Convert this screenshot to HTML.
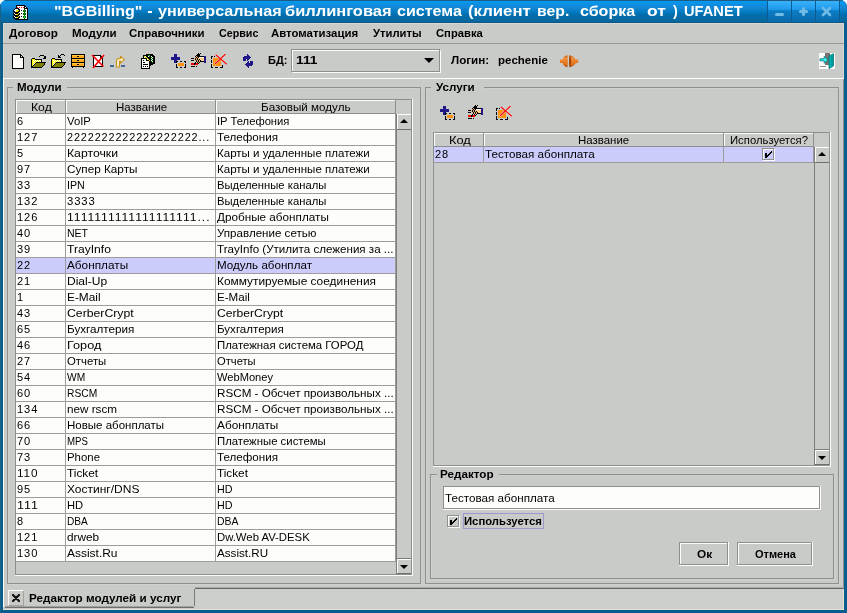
<!DOCTYPE html>
<html><head><meta charset="utf-8"><title>BGBilling</title>
<style>
html,body{margin:0;padding:0;}
body{width:847px;height:613px;overflow:hidden;position:relative;background:#fff;font-family:"Liberation Sans",sans-serif;font-size:11px;color:#000;}
div,span,svg{position:absolute;box-sizing:border-box;}
.t{white-space:pre;line-height:14px;height:14px;transform-origin:0 50%;}
.b{font-weight:bold;}
</style></head><body>

<div style="left:0;top:0;width:847px;height:613px;background:#075d8d;border-radius:7px 7px 0 0;overflow:hidden;will-change:transform;">
<div style="left:0;top:0;width:847px;height:23px;background:linear-gradient(#0098f0 0px,#0098f0 2px,#0c92e6 3px,#1088da 7px,#1b85d0 8px,#0b82cb 9.5px,#0078bc 13px,#0070b0 14px,#066ba4 18px,#0868a0 21px,#0b6498 22px,#0c5b8b 23px);"></div>
<div style="left:0px;top:0px;width:847px;height:1px;background:#1f5a80;"></div>
<div style="left:0px;top:22px;width:847px;height:1px;background:#0c5a8a;"></div>
<div class="t b" style="left:54.05px;top:2.00px;transform:scaleX(1.1467);font-size:14px;line-height:18px;height:18px;color:#fff;">"BGBilling"</div>
<div class="t b" style="left:157.80px;top:2.00px;transform:scaleX(1.1529);font-size:14px;line-height:18px;height:18px;color:#fff;">универсальная</div>
<div class="t b" style="left:285.23px;top:2.00px;transform:scaleX(1.1753);font-size:14px;line-height:18px;height:18px;color:#fff;">биллинговая</div>
<div class="t b" style="left:396.77px;top:2.00px;transform:scaleX(1.1478);font-size:14px;line-height:18px;height:18px;color:#fff;">система</div>
<div class="t b" style="left:468.20px;top:2.00px;transform:scaleX(1.1961);font-size:14px;line-height:18px;height:18px;color:#fff;">(клиент</div>
<div class="t b" style="left:536.66px;top:2.00px;transform:scaleX(1.1264);font-size:14px;line-height:18px;height:18px;color:#fff;">вер.</div>
<div class="t b" style="left:580.18px;top:2.00px;transform:scaleX(1.1460);font-size:14px;line-height:18px;height:18px;color:#fff;">сборка</div>
<div class="t b" style="left:647.10px;top:2.00px;transform:scaleX(1.2481);font-size:14px;line-height:18px;height:18px;color:#fff;">от</div>
<div class="t b" style="left:673.10px;top:2.00px;transform:scaleX(1.0252);font-size:14px;line-height:18px;height:18px;color:#fff;">)</div>
<div class="t b" style="left:683.75px;top:2.00px;transform:scaleX(1.0473);font-size:14px;line-height:18px;height:18px;color:#fff;">UFANET</div>
<div style="left:147.8px;top:11.4px;width:4.6px;height:2px;background:#fff;"></div>
<div style="left:767px;top:1px;width:24px;height:21px;background:linear-gradient(#38b2fc 0%,#1f9aea 40%,#0d7ec6 46%,#0a6aaa 100%);border-left:1px solid #0b5c93;"></div>
<div style="left:791px;top:1px;width:24px;height:21px;background:linear-gradient(#38b2fc 0%,#1f9aea 40%,#0d7ec6 46%,#0a6aaa 100%);border-left:1px solid #0b5c93;"></div>
<div style="left:815px;top:1px;width:24px;height:21px;background:linear-gradient(#38b2fc 0%,#1f9aea 40%,#0d7ec6 46%,#0a6aaa 100%);border-left:1px solid #0b5c93;"></div>
<div style="left:839px;top:1px;width:1px;height:21px;background:#0b5c93;"></div>
<div style="left:775px;top:13px;width:9px;height:3px;background:#70bbe6;border-radius:1.5px;"></div>
<div style="left:799px;top:10px;width:9px;height:3px;background:#70bbe6;border-radius:1.5px;"></div>
<div style="left:802px;top:7px;width:3px;height:9px;background:#70bbe6;border-radius:1.5px;"></div>
<svg style="left:821px;top:6px" width="11" height="11"><path d="M2 2L9 9M9 2L2 9" stroke="#70bbe6" stroke-width="2.6" stroke-linecap="round"/></svg>
<div style="left:3px;top:23px;width:841px;height:587px;background:#c9cbc8;"></div>
<div style="left:3px;top:23px;width:841px;height:1px;background:#d8d6d0;"></div>
<div style="left:3px;top:24px;width:1px;height:54px;background:#d8d4ce;"></div>
<div style="left:843px;top:24px;width:1px;height:54px;background:#dcd8d2;"></div>
<div class="t b" style="left:9.00px;top:26.00px;transform:scaleX(1.0652);">Договор</div>
<div class="t b" style="left:71.95px;top:26.00px;transform:scaleX(1.0491);">Модули</div>
<div class="t b" style="left:128.99px;top:26.00px;transform:scaleX(1.0418);">Справочники</div>
<div class="t b" style="left:219.00px;top:26.00px;transform:scaleX(0.9753);">Сервис</div>
<div class="t b" style="left:271.00px;top:26.00px;transform:scaleX(1.0362);">Автоматизация</div>
<div class="t b" style="left:373.00px;top:26.00px;transform:scaleX(1.0213);">Утилиты</div>
<div class="t b" style="left:436.00px;top:26.00px;transform:scaleX(1.0217);">Справка</div>
<div style="left:3px;top:43px;width:841px;height:1px;background:#979996;"></div>
<div style="left:3px;top:78px;width:841px;height:1px;background:#fdfdfc;"></div>
<div style="left:3px;top:78px;width:1px;height:529px;background:#fdfdfc;"></div>
<div style="left:0px;top:1px;width:1px;height:612px;background:#1f6089;"></div>
<div style="left:843px;top:79px;width:1px;height:510px;background:#8e908d;"></div>
<div style="left:195px;top:588px;width:649px;height:1px;background:#666865;"></div>
<div style="left:195px;top:587px;width:649px;height:1px;background:#a9aba8;"></div>
<div style="left:196px;top:589px;width:647px;height:21px;background:#cdcfcc;"></div>
<div class="t b" style="left:268.00px;top:53.40px;transform:scaleX(1.0016);">БД:</div>
<div class="t b" style="left:295.75px;top:53.40px;transform:scaleX(1.2500);">111</div>
<div class="t b" style="left:451.00px;top:53.40px;transform:scaleX(1.0575);">Логин:</div>
<div class="t b" style="left:497.96px;top:53.40px;transform:scaleX(1.0437);">pechenie</div>
<div style="left:291px;top:49px;width:149px;height:23px;background:transparent;border:1px solid #8e908d;"></div>
<div style="left:292px;top:50px;width:149px;height:23px;background:transparent;border:1px solid #fdfdfc;border-top-color:transparent;border-left-color:transparent;"></div>
<div style="left:292px;top:50px;width:1px;height:21px;background:#fdfdfc;"></div>
<div style="left:292px;top:50px;width:147px;height:1px;background:#fdfdfc;"></div>
<svg style="left:424px;top:58px" width="10" height="5"><path d="M0 0H10L5 5Z" fill="#000"/></svg>
<svg style="left:13px;top:5px" width="15" height="15" viewBox="0 0 15 15" shape-rendering="crispEdges"><rect x="3" y="0" width="9" height="1" fill="#000"/><rect x="3" y="1" width="1" height="1" fill="#000"/><rect x="4" y="1" width="7" height="1" fill="#fdfdfc"/><rect x="11" y="1" width="2" height="1" fill="#000"/><rect x="3" y="2" width="1" height="1" fill="#000"/><rect x="4" y="2" width="1" height="1" fill="#ff0000"/><rect x="5" y="2" width="1" height="1" fill="#fdfdfc"/><rect x="6" y="2" width="1" height="1" fill="#ff0000"/><rect x="7" y="2" width="1" height="1" fill="#fdfdfc"/><rect x="8" y="2" width="1" height="1" fill="#ff0000"/><rect x="9" y="2" width="1" height="1" fill="#fdfdfc"/><rect x="10" y="2" width="1" height="1" fill="#ff0000"/><rect x="11" y="2" width="1" height="1" fill="#000"/><rect x="12" y="2" width="1" height="1" fill="#fdfdfc"/><rect x="13" y="2" width="1" height="1" fill="#000"/><rect x="2" y="3" width="4" height="1" fill="#000"/><rect x="6" y="3" width="5" height="1" fill="#fdfdfc"/><rect x="11" y="3" width="4" height="1" fill="#000"/><rect x="1" y="4" width="1" height="1" fill="#000"/><rect x="2" y="4" width="3" height="1" fill="#fdfdfc"/><rect x="5" y="4" width="2" height="1" fill="#000"/><rect x="7" y="4" width="4" height="1" fill="#fdfdfc"/><rect x="11" y="4" width="1" height="1" fill="#007800"/><rect x="12" y="4" width="2" height="1" fill="#fdfdfc"/><rect x="14" y="4" width="1" height="1" fill="#000"/><rect x="0" y="5" width="1" height="1" fill="#000"/><rect x="1" y="5" width="2" height="1" fill="#fdfdfc"/><rect x="3" y="5" width="3" height="1" fill="#f0e800"/><rect x="6" y="5" width="1" height="1" fill="#000"/><rect x="7" y="5" width="1" height="1" fill="#fdfdfc"/><rect x="8" y="5" width="1" height="1" fill="#000"/><rect x="9" y="5" width="1" height="1" fill="#fdfdfc"/><rect x="10" y="5" width="3" height="1" fill="#007800"/><rect x="13" y="5" width="1" height="1" fill="#fdfdfc"/><rect x="14" y="5" width="1" height="1" fill="#000"/><rect x="0" y="6" width="2" height="1" fill="#000"/><rect x="2" y="6" width="1" height="1" fill="#fdfdfc"/><rect x="3" y="6" width="2" height="1" fill="#f0e800"/><rect x="5" y="6" width="2" height="1" fill="#000"/><rect x="7" y="6" width="3" height="1" fill="#fdfdfc"/><rect x="10" y="6" width="3" height="1" fill="#007800"/><rect x="13" y="6" width="1" height="1" fill="#fdfdfc"/><rect x="14" y="6" width="1" height="1" fill="#000"/><rect x="1" y="7" width="5" height="1" fill="#000"/><rect x="6" y="7" width="5" height="1" fill="#fdfdfc"/><rect x="11" y="7" width="1" height="1" fill="#007800"/><rect x="12" y="7" width="2" height="1" fill="#fdfdfc"/><rect x="14" y="7" width="1" height="1" fill="#000"/><rect x="0" y="8" width="1" height="1" fill="#000"/><rect x="1" y="8" width="1" height="1" fill="#fdfdfc"/><rect x="2" y="8" width="3" height="1" fill="#000"/><rect x="5" y="8" width="1" height="1" fill="#f0e800"/><rect x="6" y="8" width="1" height="1" fill="#000"/><rect x="7" y="8" width="1" height="1" fill="#fdfdfc"/><rect x="8" y="8" width="1" height="1" fill="#000"/><rect x="9" y="8" width="1" height="1" fill="#fdfdfc"/><rect x="10" y="8" width="3" height="1" fill="#007800"/><rect x="13" y="8" width="1" height="1" fill="#fdfdfc"/><rect x="14" y="8" width="1" height="1" fill="#000"/><rect x="0" y="9" width="2" height="1" fill="#000"/><rect x="2" y="9" width="1" height="1" fill="#fdfdfc"/><rect x="3" y="9" width="2" height="1" fill="#f0e800"/><rect x="5" y="9" width="2" height="1" fill="#000"/><rect x="7" y="9" width="3" height="1" fill="#fdfdfc"/><rect x="10" y="9" width="3" height="1" fill="#007800"/><rect x="13" y="9" width="1" height="1" fill="#fdfdfc"/><rect x="14" y="9" width="1" height="1" fill="#000"/><rect x="1" y="10" width="5" height="1" fill="#000"/><rect x="6" y="10" width="5" height="1" fill="#fdfdfc"/><rect x="11" y="10" width="1" height="1" fill="#007800"/><rect x="12" y="10" width="2" height="1" fill="#fdfdfc"/><rect x="14" y="10" width="1" height="1" fill="#000"/><rect x="0" y="11" width="1" height="1" fill="#000"/><rect x="1" y="11" width="1" height="1" fill="#fdfdfc"/><rect x="2" y="11" width="3" height="1" fill="#000"/><rect x="5" y="11" width="1" height="1" fill="#f0e800"/><rect x="6" y="11" width="1" height="1" fill="#000"/><rect x="7" y="11" width="1" height="1" fill="#fdfdfc"/><rect x="8" y="11" width="1" height="1" fill="#000"/><rect x="9" y="11" width="1" height="1" fill="#fdfdfc"/><rect x="10" y="11" width="1" height="1" fill="#007800"/><rect x="11" y="11" width="1" height="1" fill="#00e040"/><rect x="12" y="11" width="1" height="1" fill="#007800"/><rect x="13" y="11" width="1" height="1" fill="#fdfdfc"/><rect x="14" y="11" width="1" height="1" fill="#000"/><rect x="0" y="12" width="2" height="1" fill="#000"/><rect x="2" y="12" width="1" height="1" fill="#fdfdfc"/><rect x="3" y="12" width="2" height="1" fill="#f0e800"/><rect x="5" y="12" width="2" height="1" fill="#000"/><rect x="7" y="12" width="3" height="1" fill="#fdfdfc"/><rect x="10" y="12" width="1" height="1" fill="#007800"/><rect x="11" y="12" width="1" height="1" fill="#00e040"/><rect x="12" y="12" width="1" height="1" fill="#007800"/><rect x="13" y="12" width="1" height="1" fill="#fdfdfc"/><rect x="14" y="12" width="1" height="1" fill="#000"/><rect x="1" y="13" width="5" height="1" fill="#000"/><rect x="6" y="13" width="5" height="1" fill="#fdfdfc"/><rect x="11" y="13" width="1" height="1" fill="#007800"/><rect x="12" y="13" width="2" height="1" fill="#fdfdfc"/><rect x="14" y="13" width="1" height="1" fill="#000"/><rect x="2" y="14" width="13" height="1" fill="#000"/></svg>
<svg style="left:12px;top:54px" width="12" height="15" viewBox="0 0 12 15" shape-rendering="crispEdges"><rect x="0" y="0" width="9" height="1" fill="#000"/><rect x="0" y="1" width="1" height="1" fill="#000"/><rect x="1" y="1" width="7" height="1" fill="#fdfdfc"/><rect x="8" y="1" width="2" height="1" fill="#000"/><rect x="0" y="2" width="1" height="1" fill="#000"/><rect x="1" y="2" width="7" height="1" fill="#fdfdfc"/><rect x="8" y="2" width="1" height="1" fill="#000"/><rect x="9" y="2" width="1" height="1" fill="#fdfdfc"/><rect x="10" y="2" width="1" height="1" fill="#000"/><rect x="0" y="3" width="1" height="1" fill="#000"/><rect x="1" y="3" width="7" height="1" fill="#fdfdfc"/><rect x="8" y="3" width="4" height="1" fill="#000"/><rect x="0" y="4" width="1" height="1" fill="#000"/><rect x="1" y="4" width="10" height="1" fill="#fdfdfc"/><rect x="11" y="4" width="1" height="1" fill="#000"/><rect x="0" y="5" width="1" height="1" fill="#000"/><rect x="1" y="5" width="10" height="1" fill="#fdfdfc"/><rect x="11" y="5" width="1" height="1" fill="#000"/><rect x="0" y="6" width="1" height="1" fill="#000"/><rect x="1" y="6" width="10" height="1" fill="#fdfdfc"/><rect x="11" y="6" width="1" height="1" fill="#000"/><rect x="0" y="7" width="1" height="1" fill="#000"/><rect x="1" y="7" width="10" height="1" fill="#fdfdfc"/><rect x="11" y="7" width="1" height="1" fill="#000"/><rect x="0" y="8" width="1" height="1" fill="#000"/><rect x="1" y="8" width="10" height="1" fill="#fdfdfc"/><rect x="11" y="8" width="1" height="1" fill="#000"/><rect x="0" y="9" width="1" height="1" fill="#000"/><rect x="1" y="9" width="10" height="1" fill="#fdfdfc"/><rect x="11" y="9" width="1" height="1" fill="#000"/><rect x="0" y="10" width="1" height="1" fill="#000"/><rect x="1" y="10" width="10" height="1" fill="#fdfdfc"/><rect x="11" y="10" width="1" height="1" fill="#000"/><rect x="0" y="11" width="1" height="1" fill="#000"/><rect x="1" y="11" width="10" height="1" fill="#fdfdfc"/><rect x="11" y="11" width="1" height="1" fill="#000"/><rect x="0" y="12" width="1" height="1" fill="#000"/><rect x="1" y="12" width="10" height="1" fill="#fdfdfc"/><rect x="11" y="12" width="1" height="1" fill="#000"/><rect x="0" y="13" width="1" height="1" fill="#000"/><rect x="1" y="13" width="10" height="1" fill="#fdfdfc"/><rect x="11" y="13" width="1" height="1" fill="#000"/><rect x="0" y="14" width="12" height="1" fill="#000"/></svg>
<svg style="left:31px;top:54px" width="16" height="14" viewBox="0 0 16 14" shape-rendering="crispEdges"><rect x="9" y="1" width="4" height="1" fill="#000"/><rect x="8" y="2" width="1" height="1" fill="#000"/><rect x="13" y="2" width="2" height="1" fill="#000"/><rect x="13" y="3" width="2" height="1" fill="#000"/><rect x="1" y="4" width="3" height="1" fill="#000"/><rect x="12" y="4" width="3" height="1" fill="#000"/><rect x="0" y="5" width="1" height="1" fill="#000"/><rect x="1" y="5" width="3" height="1" fill="#ffff00"/><rect x="4" y="5" width="7" height="1" fill="#000"/><rect x="0" y="6" width="1" height="1" fill="#000"/><rect x="1" y="6" width="1" height="1" fill="#ffff00"/><rect x="2" y="6" width="1" height="1" fill="#fdfdfc"/><rect x="3" y="6" width="1" height="1" fill="#ffff00"/><rect x="4" y="6" width="1" height="1" fill="#fdfdfc"/><rect x="5" y="6" width="1" height="1" fill="#ffff00"/><rect x="6" y="6" width="1" height="1" fill="#fdfdfc"/><rect x="7" y="6" width="1" height="1" fill="#ffff00"/><rect x="8" y="6" width="1" height="1" fill="#fdfdfc"/><rect x="9" y="6" width="1" height="1" fill="#ffff00"/><rect x="10" y="6" width="1" height="1" fill="#000"/><rect x="0" y="7" width="1" height="1" fill="#000"/><rect x="1" y="7" width="2" height="1" fill="#ffff00"/><rect x="3" y="7" width="1" height="1" fill="#fdfdfc"/><rect x="4" y="7" width="1" height="1" fill="#ffff00"/><rect x="5" y="7" width="1" height="1" fill="#fdfdfc"/><rect x="6" y="7" width="1" height="1" fill="#ffff00"/><rect x="7" y="7" width="1" height="1" fill="#fdfdfc"/><rect x="8" y="7" width="1" height="1" fill="#ffff00"/><rect x="9" y="7" width="1" height="1" fill="#fdfdfc"/><rect x="10" y="7" width="1" height="1" fill="#000"/><rect x="0" y="8" width="1" height="1" fill="#000"/><rect x="1" y="8" width="1" height="1" fill="#ffff00"/><rect x="2" y="8" width="1" height="1" fill="#fdfdfc"/><rect x="3" y="8" width="2" height="1" fill="#ffff00"/><rect x="5" y="8" width="10" height="1" fill="#000"/><rect x="0" y="9" width="1" height="1" fill="#000"/><rect x="1" y="9" width="2" height="1" fill="#ffff00"/><rect x="3" y="9" width="1" height="1" fill="#fdfdfc"/><rect x="4" y="9" width="1" height="1" fill="#000"/><rect x="5" y="9" width="8" height="1" fill="#808000"/><rect x="13" y="9" width="1" height="1" fill="#000"/><rect x="0" y="10" width="1" height="1" fill="#000"/><rect x="1" y="10" width="1" height="1" fill="#ffff00"/><rect x="2" y="10" width="1" height="1" fill="#fdfdfc"/><rect x="3" y="10" width="1" height="1" fill="#000"/><rect x="4" y="10" width="9" height="1" fill="#808000"/><rect x="13" y="10" width="1" height="1" fill="#000"/><rect x="0" y="11" width="1" height="1" fill="#000"/><rect x="1" y="11" width="1" height="1" fill="#ffff00"/><rect x="2" y="11" width="1" height="1" fill="#000"/><rect x="3" y="11" width="9" height="1" fill="#808000"/><rect x="12" y="11" width="1" height="1" fill="#000"/><rect x="0" y="12" width="2" height="1" fill="#000"/><rect x="2" y="12" width="9" height="1" fill="#808000"/><rect x="11" y="12" width="1" height="1" fill="#000"/><rect x="0" y="13" width="11" height="1" fill="#000"/></svg>
<svg style="left:51px;top:54px" width="16" height="14" viewBox="0 0 16 14" shape-rendering="crispEdges"><rect x="10" y="0" width="3" height="1" fill="#000"/><rect x="7" y="1" width="1" height="1" fill="#000"/><rect x="9" y="1" width="1" height="1" fill="#000"/><rect x="13" y="1" width="1" height="1" fill="#000"/><rect x="7" y="2" width="2" height="1" fill="#000"/><rect x="7" y="3" width="3" height="1" fill="#000"/><rect x="1" y="4" width="3" height="1" fill="#000"/><rect x="0" y="5" width="1" height="1" fill="#000"/><rect x="1" y="5" width="3" height="1" fill="#ffff00"/><rect x="4" y="5" width="7" height="1" fill="#000"/><rect x="0" y="6" width="1" height="1" fill="#000"/><rect x="1" y="6" width="1" height="1" fill="#ffff00"/><rect x="2" y="6" width="1" height="1" fill="#fdfdfc"/><rect x="3" y="6" width="1" height="1" fill="#ffff00"/><rect x="4" y="6" width="1" height="1" fill="#fdfdfc"/><rect x="5" y="6" width="1" height="1" fill="#ffff00"/><rect x="6" y="6" width="1" height="1" fill="#fdfdfc"/><rect x="7" y="6" width="1" height="1" fill="#ffff00"/><rect x="8" y="6" width="1" height="1" fill="#fdfdfc"/><rect x="9" y="6" width="1" height="1" fill="#ffff00"/><rect x="10" y="6" width="1" height="1" fill="#000"/><rect x="0" y="7" width="1" height="1" fill="#000"/><rect x="1" y="7" width="2" height="1" fill="#ffff00"/><rect x="3" y="7" width="1" height="1" fill="#fdfdfc"/><rect x="4" y="7" width="1" height="1" fill="#ffff00"/><rect x="5" y="7" width="1" height="1" fill="#fdfdfc"/><rect x="6" y="7" width="1" height="1" fill="#ffff00"/><rect x="7" y="7" width="1" height="1" fill="#fdfdfc"/><rect x="8" y="7" width="1" height="1" fill="#ffff00"/><rect x="9" y="7" width="1" height="1" fill="#fdfdfc"/><rect x="10" y="7" width="1" height="1" fill="#000"/><rect x="0" y="8" width="1" height="1" fill="#000"/><rect x="1" y="8" width="1" height="1" fill="#ffff00"/><rect x="2" y="8" width="1" height="1" fill="#fdfdfc"/><rect x="3" y="8" width="2" height="1" fill="#ffff00"/><rect x="5" y="8" width="10" height="1" fill="#000"/><rect x="0" y="9" width="1" height="1" fill="#000"/><rect x="1" y="9" width="2" height="1" fill="#ffff00"/><rect x="3" y="9" width="1" height="1" fill="#fdfdfc"/><rect x="4" y="9" width="1" height="1" fill="#000"/><rect x="5" y="9" width="8" height="1" fill="#808000"/><rect x="13" y="9" width="1" height="1" fill="#000"/><rect x="0" y="10" width="1" height="1" fill="#000"/><rect x="1" y="10" width="1" height="1" fill="#ffff00"/><rect x="2" y="10" width="1" height="1" fill="#fdfdfc"/><rect x="3" y="10" width="1" height="1" fill="#000"/><rect x="4" y="10" width="9" height="1" fill="#808000"/><rect x="13" y="10" width="1" height="1" fill="#000"/><rect x="0" y="11" width="1" height="1" fill="#000"/><rect x="1" y="11" width="1" height="1" fill="#ffff00"/><rect x="2" y="11" width="1" height="1" fill="#000"/><rect x="3" y="11" width="9" height="1" fill="#808000"/><rect x="12" y="11" width="1" height="1" fill="#000"/><rect x="0" y="12" width="2" height="1" fill="#000"/><rect x="2" y="12" width="9" height="1" fill="#808000"/><rect x="11" y="12" width="1" height="1" fill="#000"/><rect x="0" y="13" width="11" height="1" fill="#000"/></svg>
<svg style="left:71px;top:54px" width="14" height="14" viewBox="0 0 14 14" shape-rendering="crispEdges"><rect x="0" y="0" width="14" height="1" fill="#000"/><rect x="0" y="1" width="1" height="1" fill="#000"/><rect x="1" y="1" width="12" height="1" fill="#ffc848"/><rect x="13" y="1" width="1" height="1" fill="#000"/><rect x="0" y="2" width="1" height="1" fill="#000"/><rect x="1" y="2" width="5" height="1" fill="#ffa818"/><rect x="6" y="2" width="2" height="1" fill="#000"/><rect x="8" y="2" width="5" height="1" fill="#ffa818"/><rect x="13" y="2" width="1" height="1" fill="#000"/><rect x="0" y="3" width="1" height="1" fill="#000"/><rect x="1" y="3" width="12" height="1" fill="#ffa818"/><rect x="13" y="3" width="1" height="1" fill="#000"/><rect x="0" y="4" width="14" height="1" fill="#000"/><rect x="0" y="5" width="1" height="1" fill="#000"/><rect x="1" y="5" width="12" height="1" fill="#ffc848"/><rect x="13" y="5" width="1" height="1" fill="#000"/><rect x="0" y="6" width="1" height="1" fill="#000"/><rect x="1" y="6" width="5" height="1" fill="#ffa818"/><rect x="6" y="6" width="2" height="1" fill="#000"/><rect x="8" y="6" width="5" height="1" fill="#ffa818"/><rect x="13" y="6" width="1" height="1" fill="#000"/><rect x="0" y="7" width="1" height="1" fill="#000"/><rect x="1" y="7" width="12" height="1" fill="#ffa818"/><rect x="13" y="7" width="1" height="1" fill="#000"/><rect x="0" y="8" width="14" height="1" fill="#000"/><rect x="0" y="9" width="1" height="1" fill="#000"/><rect x="1" y="9" width="12" height="1" fill="#ffc848"/><rect x="13" y="9" width="1" height="1" fill="#000"/><rect x="0" y="10" width="1" height="1" fill="#000"/><rect x="1" y="10" width="5" height="1" fill="#ffa818"/><rect x="6" y="10" width="2" height="1" fill="#000"/><rect x="8" y="10" width="5" height="1" fill="#ffa818"/><rect x="13" y="10" width="1" height="1" fill="#000"/><rect x="0" y="11" width="1" height="1" fill="#000"/><rect x="1" y="11" width="12" height="1" fill="#ffa818"/><rect x="13" y="11" width="1" height="1" fill="#000"/><rect x="0" y="12" width="14" height="1" fill="#000"/><rect x="1" y="13" width="1" height="1" fill="#000"/><rect x="12" y="13" width="1" height="1" fill="#000"/></svg>
<svg style="left:91px;top:54px" width="15" height="15" viewBox="0 0 15 15" shape-rendering="crispEdges"><rect x="2" y="1" width="8" height="1" fill="#000"/><rect x="2" y="2" width="1" height="1" fill="#000"/><rect x="3" y="2" width="6" height="1" fill="#fdfdfc"/><rect x="9" y="2" width="2" height="1" fill="#000"/><rect x="2" y="3" width="1" height="1" fill="#000"/><rect x="3" y="3" width="6" height="1" fill="#fdfdfc"/><rect x="9" y="3" width="3" height="1" fill="#000"/><rect x="2" y="4" width="1" height="1" fill="#000"/><rect x="3" y="4" width="8" height="1" fill="#fdfdfc"/><rect x="11" y="4" width="1" height="1" fill="#000"/><rect x="2" y="5" width="1" height="1" fill="#000"/><rect x="3" y="5" width="8" height="1" fill="#fdfdfc"/><rect x="11" y="5" width="1" height="1" fill="#000"/><rect x="2" y="6" width="1" height="1" fill="#000"/><rect x="3" y="6" width="8" height="1" fill="#fdfdfc"/><rect x="11" y="6" width="1" height="1" fill="#000"/><rect x="2" y="7" width="1" height="1" fill="#000"/><rect x="3" y="7" width="8" height="1" fill="#fdfdfc"/><rect x="11" y="7" width="1" height="1" fill="#000"/><rect x="2" y="8" width="1" height="1" fill="#000"/><rect x="3" y="8" width="8" height="1" fill="#fdfdfc"/><rect x="11" y="8" width="1" height="1" fill="#000"/><rect x="2" y="9" width="1" height="1" fill="#000"/><rect x="3" y="9" width="8" height="1" fill="#fdfdfc"/><rect x="11" y="9" width="1" height="1" fill="#000"/><rect x="2" y="10" width="1" height="1" fill="#000"/><rect x="3" y="10" width="8" height="1" fill="#fdfdfc"/><rect x="11" y="10" width="1" height="1" fill="#000"/><rect x="2" y="11" width="1" height="1" fill="#000"/><rect x="3" y="11" width="8" height="1" fill="#fdfdfc"/><rect x="11" y="11" width="1" height="1" fill="#000"/><rect x="2" y="12" width="10" height="1" fill="#000"/><g shape-rendering="auto"><path d="M1 1L12.5 12.5M13 1L2 14" stroke="#ff0000" stroke-width="1.6" fill="none"/></g></svg>
<svg style="left:110px;top:55px" width="16" height="13" viewBox="0 0 16 13" shape-rendering="crispEdges"><rect x="0" y="10" width="4" height="2" fill="#48689c"/><rect x="11" y="10" width="4" height="2" fill="#48689c"/><g shape-rendering="auto"><path d="M6.5 12V6Q6.5 3.5 9 3.5H10.5V1.2L14.3 4.7L10.5 8.2V6H9.5V12Z" fill="#fff0c8" stroke="#c8901c" stroke-width="1.1" stroke-linejoin="round"/></g></svg>
<svg style="left:141px;top:54px" width="15" height="15" viewBox="0 0 15 15" shape-rendering="crispEdges"><rect x="5" y="0" width="7" height="1" fill="#000"/><rect x="2" y="1" width="5" height="1" fill="#000"/><rect x="7" y="1" width="1" height="1" fill="#007800"/><rect x="8" y="1" width="1" height="1" fill="#00e040"/><rect x="9" y="1" width="4" height="1" fill="#000"/><rect x="2" y="2" width="1" height="1" fill="#000"/><rect x="3" y="2" width="1" height="1" fill="#f0e800"/><rect x="4" y="2" width="1" height="1" fill="#fdfdfc"/><rect x="5" y="2" width="2" height="1" fill="#000"/><rect x="7" y="2" width="1" height="1" fill="#fdfdfc"/><rect x="8" y="2" width="1" height="1" fill="#007800"/><rect x="9" y="2" width="1" height="1" fill="#000"/><rect x="10" y="2" width="1" height="1" fill="#fdfdfc"/><rect x="11" y="2" width="3" height="1" fill="#000"/><rect x="2" y="3" width="1" height="1" fill="#000"/><rect x="3" y="3" width="1" height="1" fill="#fdfdfc"/><rect x="4" y="3" width="2" height="1" fill="#f0e800"/><rect x="6" y="3" width="4" height="1" fill="#000"/><rect x="10" y="3" width="1" height="1" fill="#007800"/><rect x="11" y="3" width="1" height="1" fill="#fdfdfc"/><rect x="12" y="3" width="2" height="1" fill="#000"/><rect x="0" y="4" width="6" height="1" fill="#000"/><rect x="6" y="4" width="1" height="1" fill="#f0e800"/><rect x="7" y="4" width="3" height="1" fill="#000"/><rect x="10" y="4" width="1" height="1" fill="#fdfdfc"/><rect x="11" y="4" width="1" height="1" fill="#007800"/><rect x="12" y="4" width="2" height="1" fill="#000"/><rect x="0" y="5" width="1" height="1" fill="#000"/><rect x="1" y="5" width="4" height="1" fill="#fdfdfc"/><rect x="5" y="5" width="1" height="1" fill="#000"/><rect x="6" y="5" width="1" height="1" fill="#fdfdfc"/><rect x="7" y="5" width="1" height="1" fill="#f0e800"/><rect x="8" y="5" width="2" height="1" fill="#000"/><rect x="10" y="5" width="1" height="1" fill="#007800"/><rect x="11" y="5" width="1" height="1" fill="#fdfdfc"/><rect x="12" y="5" width="2" height="1" fill="#000"/><rect x="0" y="6" width="1" height="1" fill="#000"/><rect x="1" y="6" width="1" height="1" fill="#fdfdfc"/><rect x="2" y="6" width="1" height="1" fill="#000"/><rect x="3" y="6" width="2" height="1" fill="#fdfdfc"/><rect x="5" y="6" width="3" height="1" fill="#000"/><rect x="8" y="6" width="1" height="1" fill="#f0e800"/><rect x="9" y="6" width="1" height="1" fill="#000"/><rect x="10" y="6" width="1" height="1" fill="#fdfdfc"/><rect x="11" y="6" width="1" height="1" fill="#007800"/><rect x="12" y="6" width="2" height="1" fill="#000"/><rect x="0" y="7" width="1" height="1" fill="#000"/><rect x="1" y="7" width="7" height="1" fill="#fdfdfc"/><rect x="8" y="7" width="2" height="1" fill="#000"/><rect x="10" y="7" width="1" height="1" fill="#007800"/><rect x="11" y="7" width="1" height="1" fill="#fdfdfc"/><rect x="12" y="7" width="2" height="1" fill="#000"/><rect x="0" y="8" width="1" height="1" fill="#000"/><rect x="1" y="8" width="1" height="1" fill="#fdfdfc"/><rect x="2" y="8" width="2" height="1" fill="#000"/><rect x="4" y="8" width="4" height="1" fill="#fdfdfc"/><rect x="8" y="8" width="3" height="1" fill="#000"/><rect x="11" y="8" width="1" height="1" fill="#007800"/><rect x="12" y="8" width="2" height="1" fill="#000"/><rect x="0" y="9" width="1" height="1" fill="#000"/><rect x="1" y="9" width="7" height="1" fill="#fdfdfc"/><rect x="8" y="9" width="6" height="1" fill="#000"/><rect x="0" y="10" width="1" height="1" fill="#000"/><rect x="1" y="10" width="1" height="1" fill="#fdfdfc"/><rect x="2" y="10" width="5" height="1" fill="#000"/><rect x="7" y="10" width="1" height="1" fill="#fdfdfc"/><rect x="8" y="10" width="4" height="1" fill="#000"/><rect x="0" y="11" width="1" height="1" fill="#000"/><rect x="1" y="11" width="7" height="1" fill="#fdfdfc"/><rect x="8" y="11" width="2" height="1" fill="#000"/><rect x="0" y="12" width="1" height="1" fill="#000"/><rect x="1" y="12" width="1" height="1" fill="#fdfdfc"/><rect x="2" y="12" width="1" height="1" fill="#000"/><rect x="3" y="12" width="1" height="1" fill="#fdfdfc"/><rect x="4" y="12" width="1" height="1" fill="#000"/><rect x="5" y="12" width="1" height="1" fill="#fdfdfc"/><rect x="6" y="12" width="1" height="1" fill="#000"/><rect x="7" y="12" width="1" height="1" fill="#fdfdfc"/><rect x="8" y="12" width="1" height="1" fill="#000"/><rect x="0" y="13" width="1" height="1" fill="#000"/><rect x="1" y="13" width="7" height="1" fill="#fdfdfc"/><rect x="8" y="13" width="1" height="1" fill="#000"/><rect x="0" y="14" width="9" height="1" fill="#000"/></svg>
<svg style="left:171px;top:54px" width="16" height="14" viewBox="0 0 16 14" shape-rendering="crispEdges"><rect x="3" y="0" width="3" height="9" fill="#201888"/><rect x="0" y="3" width="9" height="3" fill="#201888"/><rect x="7" y="9" width="4" height="2" fill="#ff9010"/><rect x="7" y="9" width="6" height="3" fill="#ff9010"/><rect x="5" y="7" width="2" height="1" fill="#000"/><rect x="9" y="7" width="2" height="1" fill="#000"/><rect x="13" y="7" width="2" height="1" fill="#000"/><rect x="5" y="13" width="2" height="1" fill="#000"/><rect x="9" y="13" width="2" height="1" fill="#000"/><rect x="13" y="13" width="2" height="1" fill="#000"/><rect x="5" y="8" width="1" height="1" fill="#000"/><rect x="14" y="8" width="1" height="1" fill="#000"/><rect x="5" y="10" width="1" height="2" fill="#000"/><rect x="14" y="10" width="1" height="2" fill="#000"/><rect x="5" y="12" width="1" height="1" fill="#000"/><rect x="14" y="12" width="1" height="1" fill="#000"/></svg>
<svg style="left:190px;top:53px" width="16" height="14" viewBox="0 0 16 14" shape-rendering="crispEdges"><rect x="8" y="0" width="1" height="1" fill="#000"/><rect x="10" y="0" width="1" height="1" fill="#000"/><rect x="7" y="1" width="3" height="1" fill="#000"/><rect x="6" y="2" width="4" height="1" fill="#000"/><rect x="5" y="3" width="1" height="1" fill="#000"/><rect x="6" y="3" width="1" height="1" fill="#e8b070"/><rect x="7" y="3" width="7" height="1" fill="#000"/><rect x="14" y="3" width="2" height="1" fill="#201888"/><rect x="5" y="4" width="1" height="1" fill="#e8b070"/><rect x="6" y="4" width="1" height="1" fill="#000"/><rect x="7" y="4" width="1" height="1" fill="#e8b070"/><rect x="8" y="4" width="1" height="1" fill="#000"/><rect x="9" y="4" width="5" height="1" fill="#fdfdfc"/><rect x="14" y="4" width="2" height="1" fill="#201888"/><rect x="1" y="5" width="3" height="1" fill="#000"/><rect x="5" y="5" width="1" height="1" fill="#000"/><rect x="6" y="5" width="1" height="1" fill="#e8b070"/><rect x="7" y="5" width="1" height="1" fill="#000"/><rect x="8" y="5" width="1" height="1" fill="#e8b070"/><rect x="9" y="5" width="5" height="1" fill="#ffd090"/><rect x="14" y="5" width="2" height="1" fill="#201888"/><rect x="4" y="6" width="1" height="1" fill="#e8b070"/><rect x="5" y="6" width="1" height="1" fill="#000"/><rect x="6" y="6" width="1" height="1" fill="#e8b070"/><rect x="7" y="6" width="1" height="1" fill="#000"/><rect x="8" y="6" width="1" height="1" fill="#e8b070"/><rect x="9" y="6" width="1" height="1" fill="#000"/><rect x="10" y="6" width="4" height="1" fill="#ffd090"/><rect x="14" y="6" width="2" height="1" fill="#201888"/><rect x="1" y="7" width="3" height="1" fill="#000"/><rect x="5" y="7" width="1" height="1" fill="#e8b070"/><rect x="6" y="7" width="1" height="1" fill="#000"/><rect x="7" y="7" width="1" height="1" fill="#e8b070"/><rect x="8" y="7" width="1" height="1" fill="#000"/><rect x="9" y="7" width="1" height="1" fill="#e8b070"/><rect x="10" y="7" width="1" height="1" fill="#000"/><rect x="11" y="7" width="3" height="1" fill="#ffd090"/><rect x="14" y="7" width="2" height="1" fill="#201888"/><rect x="6" y="8" width="1" height="1" fill="#000"/><rect x="7" y="8" width="1" height="1" fill="#e8b070"/><rect x="8" y="8" width="1" height="1" fill="#000"/><rect x="9" y="8" width="1" height="1" fill="#e8b070"/><rect x="10" y="8" width="4" height="1" fill="#000"/><rect x="14" y="8" width="2" height="1" fill="#201888"/><rect x="5" y="9" width="1" height="1" fill="#000"/><rect x="7" y="9" width="1" height="1" fill="#000"/><rect x="8" y="9" width="1" height="1" fill="#e8b070"/><rect x="9" y="9" width="1" height="1" fill="#000"/><rect x="14" y="9" width="2" height="1" fill="#201888"/><rect x="1" y="10" width="3" height="1" fill="#ff0000"/><rect x="4" y="10" width="2" height="1" fill="#000"/><rect x="6" y="10" width="2" height="1" fill="#ff0000"/><rect x="8" y="10" width="1" height="1" fill="#000"/><rect x="1" y="11" width="3" height="1" fill="#ff0000"/><rect x="4" y="11" width="1" height="1" fill="#000"/><rect x="5" y="11" width="3" height="1" fill="#ff0000"/><rect x="1" y="13" width="4" height="1" fill="#000"/><rect x="6" y="13" width="1" height="1" fill="#000"/></svg>
<svg style="left:211px;top:54px" width="16" height="14" viewBox="0 0 16 14" shape-rendering="crispEdges"><rect x="2" y="4" width="8" height="8" fill="#ff9010"/><rect x="0" y="2" width="2" height="1" fill="#000"/><rect x="0" y="13" width="2" height="1" fill="#000"/><rect x="4" y="13" width="3" height="1" fill="#000"/><rect x="9" y="13" width="3" height="1" fill="#000"/><rect x="0" y="3" width="1" height="2" fill="#000"/><rect x="0" y="6" width="1" height="3" fill="#000"/><rect x="0" y="10" width="1" height="3" fill="#000"/><rect x="11" y="11" width="1" height="2" fill="#000"/><rect x="3" y="2" width="1" height="1" fill="#000"/><g shape-rendering="auto"><path d="M5 1L15.5 10M14.5 0L4.5 9.5" stroke="#d9e3e0" stroke-width="2.1" fill="none" stroke-linecap="round"/><path d="M5 1L15.5 10M14.5 0L4.5 9.5" stroke="#ff0000" stroke-width="1.15" fill="none" stroke-linecap="round"/></g></svg>
<svg style="left:243px;top:54px" width="11" height="14" viewBox="0 0 11 14" shape-rendering="crispEdges"><rect x="4" y="0" width="1" height="1" fill="#201888"/><rect x="4" y="1" width="2" height="1" fill="#201888"/><rect x="1" y="2" width="6" height="1" fill="#201888"/><rect x="0" y="3" width="8" height="1" fill="#201888"/><rect x="0" y="4" width="7" height="1" fill="#201888"/><rect x="0" y="5" width="3" height="1" fill="#201888"/><rect x="4" y="5" width="2" height="1" fill="#201888"/><rect x="0" y="6" width="3" height="1" fill="#201888"/><rect x="4" y="6" width="1" height="1" fill="#201888"/><rect x="5" y="7" width="1" height="1" fill="#201888"/><rect x="7" y="7" width="3" height="1" fill="#201888"/><rect x="4" y="8" width="2" height="1" fill="#201888"/><rect x="7" y="8" width="3" height="1" fill="#201888"/><rect x="3" y="9" width="7" height="1" fill="#201888"/><rect x="2" y="10" width="8" height="1" fill="#201888"/><rect x="3" y="11" width="6" height="1" fill="#201888"/><rect x="4" y="12" width="2" height="1" fill="#201888"/><rect x="5" y="13" width="1" height="1" fill="#201888"/></svg>
<svg style="left:560px;top:54.5px" width="19" height="13" viewBox="0 0 19 13"><defs><linearGradient id="cg" x1="0" y1="0" x2="0" y2="1"><stop offset="0" stop-color="#c05808"/><stop offset="0.25" stop-color="#f49040"/><stop offset="0.75" stop-color="#e07018"/><stop offset="1" stop-color="#a04408"/></linearGradient></defs><path d="M7.4 0.3C4 0.9 2.7 3.4 2.5 4.6H0V8H2.5C2.7 9.2 4 11.6 7.4 12.2C8 9 8 3.5 7.4 0.3Z" fill="url(#cg)"/><path d="M9.4 0.3C12.6 0.9 15.4 3.4 15.8 4.6H18.2V8H15.8C15.4 9.2 12.6 11.6 9.4 12.2C8.9 9 8.9 3.5 9.4 0.3Z" fill="url(#cg)"/><path d="M9.6 0.6C11.6 3 11.6 9.5 9.6 12C9 9 9 3.5 9.6 0.6Z" fill="#9c4004"/></svg>
<svg style="left:819px;top:53px" width="16" height="16" viewBox="0 0 16 16" shape-rendering="crispEdges"><rect x="0" y="0" width="16" height="16" fill="#fdfdfc"/><rect x="6" y="0" width="5" height="12" fill="#747474"/><rect x="1" y="12.5" width="6" height="1" fill="#909090"/><g shape-rendering="auto"><path d="M10 3L14.5 0.7V13L10 15.6Z" fill="#00b4b4" stroke="#007070" stroke-width="0.8"/><path d="M13 3v9" stroke="#006060" stroke-width="1" stroke-dasharray="1.5 1"/><path d="M1 5.8H5.2V3.4L8.8 6.8L5.2 10.2V7.8H1Z" fill="#40ffff" stroke="#007878" stroke-width="0.9" stroke-linejoin="round"/></g></svg>
<svg style="left:440px;top:106px" width="16" height="14" viewBox="0 0 16 14" shape-rendering="crispEdges"><rect x="3" y="0" width="3" height="9" fill="#201888"/><rect x="0" y="3" width="9" height="3" fill="#201888"/><rect x="7" y="9" width="4" height="2" fill="#ff9010"/><rect x="7" y="9" width="6" height="3" fill="#ff9010"/><rect x="5" y="7" width="2" height="1" fill="#000"/><rect x="9" y="7" width="2" height="1" fill="#000"/><rect x="13" y="7" width="2" height="1" fill="#000"/><rect x="5" y="13" width="2" height="1" fill="#000"/><rect x="9" y="13" width="2" height="1" fill="#000"/><rect x="13" y="13" width="2" height="1" fill="#000"/><rect x="5" y="8" width="1" height="1" fill="#000"/><rect x="14" y="8" width="1" height="1" fill="#000"/><rect x="5" y="10" width="1" height="2" fill="#000"/><rect x="14" y="10" width="1" height="2" fill="#000"/><rect x="5" y="12" width="1" height="1" fill="#000"/><rect x="14" y="12" width="1" height="1" fill="#000"/></svg>
<svg style="left:467px;top:105px" width="16" height="14" viewBox="0 0 16 14" shape-rendering="crispEdges"><rect x="8" y="0" width="1" height="1" fill="#000"/><rect x="10" y="0" width="1" height="1" fill="#000"/><rect x="7" y="1" width="3" height="1" fill="#000"/><rect x="6" y="2" width="4" height="1" fill="#000"/><rect x="5" y="3" width="1" height="1" fill="#000"/><rect x="6" y="3" width="1" height="1" fill="#e8b070"/><rect x="7" y="3" width="7" height="1" fill="#000"/><rect x="14" y="3" width="2" height="1" fill="#201888"/><rect x="5" y="4" width="1" height="1" fill="#e8b070"/><rect x="6" y="4" width="1" height="1" fill="#000"/><rect x="7" y="4" width="1" height="1" fill="#e8b070"/><rect x="8" y="4" width="1" height="1" fill="#000"/><rect x="9" y="4" width="5" height="1" fill="#fdfdfc"/><rect x="14" y="4" width="2" height="1" fill="#201888"/><rect x="1" y="5" width="3" height="1" fill="#000"/><rect x="5" y="5" width="1" height="1" fill="#000"/><rect x="6" y="5" width="1" height="1" fill="#e8b070"/><rect x="7" y="5" width="1" height="1" fill="#000"/><rect x="8" y="5" width="1" height="1" fill="#e8b070"/><rect x="9" y="5" width="5" height="1" fill="#ffd090"/><rect x="14" y="5" width="2" height="1" fill="#201888"/><rect x="4" y="6" width="1" height="1" fill="#e8b070"/><rect x="5" y="6" width="1" height="1" fill="#000"/><rect x="6" y="6" width="1" height="1" fill="#e8b070"/><rect x="7" y="6" width="1" height="1" fill="#000"/><rect x="8" y="6" width="1" height="1" fill="#e8b070"/><rect x="9" y="6" width="1" height="1" fill="#000"/><rect x="10" y="6" width="4" height="1" fill="#ffd090"/><rect x="14" y="6" width="2" height="1" fill="#201888"/><rect x="1" y="7" width="3" height="1" fill="#000"/><rect x="5" y="7" width="1" height="1" fill="#e8b070"/><rect x="6" y="7" width="1" height="1" fill="#000"/><rect x="7" y="7" width="1" height="1" fill="#e8b070"/><rect x="8" y="7" width="1" height="1" fill="#000"/><rect x="9" y="7" width="1" height="1" fill="#e8b070"/><rect x="10" y="7" width="1" height="1" fill="#000"/><rect x="11" y="7" width="3" height="1" fill="#ffd090"/><rect x="14" y="7" width="2" height="1" fill="#201888"/><rect x="6" y="8" width="1" height="1" fill="#000"/><rect x="7" y="8" width="1" height="1" fill="#e8b070"/><rect x="8" y="8" width="1" height="1" fill="#000"/><rect x="9" y="8" width="1" height="1" fill="#e8b070"/><rect x="10" y="8" width="4" height="1" fill="#000"/><rect x="14" y="8" width="2" height="1" fill="#201888"/><rect x="5" y="9" width="1" height="1" fill="#000"/><rect x="7" y="9" width="1" height="1" fill="#000"/><rect x="8" y="9" width="1" height="1" fill="#e8b070"/><rect x="9" y="9" width="1" height="1" fill="#000"/><rect x="14" y="9" width="2" height="1" fill="#201888"/><rect x="1" y="10" width="3" height="1" fill="#ff0000"/><rect x="4" y="10" width="2" height="1" fill="#000"/><rect x="6" y="10" width="2" height="1" fill="#ff0000"/><rect x="8" y="10" width="1" height="1" fill="#000"/><rect x="1" y="11" width="3" height="1" fill="#ff0000"/><rect x="4" y="11" width="1" height="1" fill="#000"/><rect x="5" y="11" width="3" height="1" fill="#ff0000"/><rect x="1" y="13" width="4" height="1" fill="#000"/><rect x="6" y="13" width="1" height="1" fill="#000"/></svg>
<svg style="left:496px;top:106px" width="16" height="14" viewBox="0 0 16 14" shape-rendering="crispEdges"><rect x="2" y="4" width="8" height="8" fill="#ff9010"/><rect x="0" y="2" width="2" height="1" fill="#000"/><rect x="0" y="13" width="2" height="1" fill="#000"/><rect x="4" y="13" width="3" height="1" fill="#000"/><rect x="9" y="13" width="3" height="1" fill="#000"/><rect x="0" y="3" width="1" height="2" fill="#000"/><rect x="0" y="6" width="1" height="3" fill="#000"/><rect x="0" y="10" width="1" height="3" fill="#000"/><rect x="11" y="11" width="1" height="2" fill="#000"/><rect x="3" y="2" width="1" height="1" fill="#000"/><g shape-rendering="auto"><path d="M5 1L15.5 10M14.5 0L4.5 9.5" stroke="#d9e3e0" stroke-width="2.1" fill="none" stroke-linecap="round"/><path d="M5 1L15.5 10M14.5 0L4.5 9.5" stroke="#ff0000" stroke-width="1.15" fill="none" stroke-linecap="round"/></g></svg>
<div style="left:7px;top:87px;width:6px;height:1px;background:#8e908d;"></div>
<div style="left:67px;top:87px;width:354px;height:1px;background:#8e908d;"></div>
<div style="left:7px;top:87px;width:1px;height:497px;background:#8e908d;"></div>
<div style="left:420px;top:87px;width:1px;height:497px;background:#8e908d;"></div>
<div style="left:7px;top:583px;width:414px;height:1px;background:#8e908d;"></div>
<div style="left:8px;top:88px;width:5px;height:1px;background:#cfd1ce;"></div>
<div style="left:67px;top:88px;width:353px;height:1px;background:#cfd1ce;"></div>
<div style="left:8px;top:88px;width:1px;height:495px;background:#cfd1ce;"></div>
<div style="left:421px;top:87px;width:1px;height:498px;background:#cfd1ce;"></div>
<div style="left:7px;top:584px;width:415px;height:1px;background:#cfd1ce;"></div>
<div class="t b" style="left:16.95px;top:80.00px;transform:scaleX(1.0488);">Модули</div>
<div style="left:15px;top:99px;width:397px;height:476px;background:transparent;border:1px solid #8e908d;"></div>
<div style="left:412px;top:99px;width:1px;height:477px;background:#fdfdfc;"></div>
<div style="left:15px;top:575px;width:398px;height:1px;background:#fdfdfc;"></div>
<div style="left:16px;top:100px;width:49px;height:1px;background:#fdfdfc;"></div>
<div style="left:16px;top:100px;width:1px;height:13px;background:#fdfdfc;"></div>
<div style="left:65px;top:100px;width:1px;height:14px;background:#8e908d;"></div>
<div style="left:16px;top:113px;width:50px;height:1px;background:#8e908d;"></div>
<div class="t" style="left:30.89px;top:99.50px;transform:scaleX(1.1111);">Код</div>
<div style="left:66px;top:100px;width:149px;height:1px;background:#fdfdfc;"></div>
<div style="left:66px;top:100px;width:1px;height:13px;background:#fdfdfc;"></div>
<div style="left:215px;top:100px;width:1px;height:14px;background:#8e908d;"></div>
<div style="left:66px;top:113px;width:150px;height:1px;background:#8e908d;"></div>
<div class="t" style="left:115.96px;top:99.50px;transform:scaleX(1.0419);">Название</div>
<div style="left:216px;top:100px;width:179px;height:1px;background:#fdfdfc;"></div>
<div style="left:216px;top:100px;width:1px;height:13px;background:#fdfdfc;"></div>
<div style="left:395px;top:100px;width:1px;height:14px;background:#8e908d;"></div>
<div style="left:216px;top:113px;width:180px;height:1px;background:#8e908d;"></div>
<div class="t" style="left:260.94px;top:99.50px;transform:scaleX(1.0602);">Базовый модуль</div>
<div style="left:16px;top:114px;width:380px;height:15px;background:#fdfdfc;"></div>
<div style="left:65px;top:114px;width:1px;height:16px;background:#9c9d9b;"></div>
<div style="left:215px;top:114px;width:1px;height:16px;background:#9c9d9b;"></div>
<div style="left:395px;top:114px;width:1px;height:16px;background:#9c9d9b;"></div>
<div style="left:16px;top:129px;width:380px;height:1px;background:#9c9d9b;"></div>
<div class="t" style="left:17.00px;top:114.00px;transform:scaleX(1.0000);letter-spacing:0.88px;">6</div>
<div class="t" style="left:67.00px;top:114.00px;transform:scaleX(1.0268);">VoIP</div>
<div class="t" style="left:217.00px;top:114.00px;transform:scaleX(1.0201);">IP Телефония</div>
<div style="left:16px;top:130px;width:380px;height:15px;background:#fdfdfc;"></div>
<div style="left:65px;top:130px;width:1px;height:16px;background:#9c9d9b;"></div>
<div style="left:215px;top:130px;width:1px;height:16px;background:#9c9d9b;"></div>
<div style="left:395px;top:130px;width:1px;height:16px;background:#9c9d9b;"></div>
<div style="left:16px;top:145px;width:380px;height:1px;background:#9c9d9b;"></div>
<div class="t" style="left:17.00px;top:130.00px;transform:scaleX(1.0101);letter-spacing:0.88px;">127</div>
<div class="t" style="left:67.00px;top:130.00px;transform:scaleX(0.9888);letter-spacing:0.88px;">2222222222222222222...</div>
<div class="t" style="left:217.00px;top:130.00px;transform:scaleX(1.0562);">Телефония</div>
<div style="left:16px;top:146px;width:380px;height:15px;background:#fdfdfc;"></div>
<div style="left:65px;top:146px;width:1px;height:16px;background:#9c9d9b;"></div>
<div style="left:215px;top:146px;width:1px;height:16px;background:#9c9d9b;"></div>
<div style="left:395px;top:146px;width:1px;height:16px;background:#9c9d9b;"></div>
<div style="left:16px;top:161px;width:380px;height:1px;background:#9c9d9b;"></div>
<div class="t" style="left:17.00px;top:146.00px;transform:scaleX(1.0000);letter-spacing:0.88px;">5</div>
<div class="t" style="left:67.00px;top:146.00px;transform:scaleX(1.1111);">Карточки</div>
<div class="t" style="left:217.00px;top:146.00px;transform:scaleX(1.0483);">Карты и удаленные платежи</div>
<div style="left:16px;top:162px;width:380px;height:15px;background:#fdfdfc;"></div>
<div style="left:65px;top:162px;width:1px;height:16px;background:#9c9d9b;"></div>
<div style="left:215px;top:162px;width:1px;height:16px;background:#9c9d9b;"></div>
<div style="left:395px;top:162px;width:1px;height:16px;background:#9c9d9b;"></div>
<div style="left:16px;top:177px;width:380px;height:1px;background:#9c9d9b;"></div>
<div class="t" style="left:17.00px;top:162.00px;transform:scaleX(1.0060);letter-spacing:0.88px;">97</div>
<div class="t" style="left:67.00px;top:162.00px;transform:scaleX(1.0668);">Супер Карты</div>
<div class="t" style="left:217.00px;top:162.00px;transform:scaleX(1.0483);">Карты и удаленные платежи</div>
<div style="left:16px;top:178px;width:380px;height:15px;background:#fdfdfc;"></div>
<div style="left:65px;top:178px;width:1px;height:16px;background:#9c9d9b;"></div>
<div style="left:215px;top:178px;width:1px;height:16px;background:#9c9d9b;"></div>
<div style="left:395px;top:178px;width:1px;height:16px;background:#9c9d9b;"></div>
<div style="left:16px;top:193px;width:380px;height:1px;background:#9c9d9b;"></div>
<div class="t" style="left:17.00px;top:178.00px;transform:scaleX(1.0060);letter-spacing:0.88px;">33</div>
<div class="t" style="left:67.00px;top:178.00px;transform:scaleX(0.9693);">IPN</div>
<div class="t" style="left:217.00px;top:178.00px;transform:scaleX(1.0227);">Выделенные каналы</div>
<div style="left:16px;top:194px;width:380px;height:15px;background:#fdfdfc;"></div>
<div style="left:65px;top:194px;width:1px;height:16px;background:#9c9d9b;"></div>
<div style="left:215px;top:194px;width:1px;height:16px;background:#9c9d9b;"></div>
<div style="left:395px;top:194px;width:1px;height:16px;background:#9c9d9b;"></div>
<div style="left:16px;top:209px;width:380px;height:1px;background:#9c9d9b;"></div>
<div class="t" style="left:17.00px;top:194.00px;transform:scaleX(1.0101);letter-spacing:0.88px;">132</div>
<div class="t" style="left:67.00px;top:194.00px;transform:scaleX(1.0241);letter-spacing:0.88px;">3333</div>
<div class="t" style="left:217.00px;top:194.00px;transform:scaleX(1.0227);">Выделенные каналы</div>
<div style="left:16px;top:210px;width:380px;height:15px;background:#fdfdfc;"></div>
<div style="left:65px;top:210px;width:1px;height:16px;background:#9c9d9b;"></div>
<div style="left:215px;top:210px;width:1px;height:16px;background:#9c9d9b;"></div>
<div style="left:395px;top:210px;width:1px;height:16px;background:#9c9d9b;"></div>
<div style="left:16px;top:225px;width:380px;height:1px;background:#9c9d9b;"></div>
<div class="t" style="left:17.00px;top:210.00px;transform:scaleX(1.0101);letter-spacing:0.88px;">126</div>
<div class="t" style="left:67.00px;top:210.00px;transform:scaleX(1.1032);letter-spacing:0.88px;">1111111111111111111...</div>
<div class="t" style="left:217.00px;top:210.00px;transform:scaleX(1.0654);">Дробные абонплаты</div>
<div style="left:16px;top:226px;width:380px;height:15px;background:#fdfdfc;"></div>
<div style="left:65px;top:226px;width:1px;height:16px;background:#9c9d9b;"></div>
<div style="left:215px;top:226px;width:1px;height:16px;background:#9c9d9b;"></div>
<div style="left:395px;top:226px;width:1px;height:16px;background:#9c9d9b;"></div>
<div style="left:16px;top:241px;width:380px;height:1px;background:#9c9d9b;"></div>
<div class="t" style="left:17.00px;top:226.00px;transform:scaleX(1.0060);letter-spacing:0.88px;">40</div>
<div class="t" style="left:67.00px;top:226.00px;transform:scaleX(0.9557);">NET</div>
<div class="t" style="left:217.00px;top:226.00px;transform:scaleX(1.0532);">Управление сетью</div>
<div style="left:16px;top:242px;width:380px;height:15px;background:#fdfdfc;"></div>
<div style="left:65px;top:242px;width:1px;height:16px;background:#9c9d9b;"></div>
<div style="left:215px;top:242px;width:1px;height:16px;background:#9c9d9b;"></div>
<div style="left:395px;top:242px;width:1px;height:16px;background:#9c9d9b;"></div>
<div style="left:16px;top:257px;width:380px;height:1px;background:#9c9d9b;"></div>
<div class="t" style="left:17.00px;top:242.00px;transform:scaleX(1.0060);letter-spacing:0.88px;">39</div>
<div class="t" style="left:67.00px;top:242.00px;transform:scaleX(1.1000);">TrayInfo</div>
<div class="t" style="left:217.00px;top:242.00px;transform:scaleX(1.0539);">TrayInfo (Утилита слежения за ...</div>
<div style="left:16px;top:258px;width:380px;height:15px;background:#ccccfc;"></div>
<div style="left:65px;top:258px;width:1px;height:16px;background:#9c9d9b;"></div>
<div style="left:215px;top:258px;width:1px;height:16px;background:#9c9d9b;"></div>
<div style="left:395px;top:258px;width:1px;height:16px;background:#9c9d9b;"></div>
<div style="left:16px;top:273px;width:380px;height:1px;background:#9c9d9b;"></div>
<div class="t" style="left:17.00px;top:258.00px;transform:scaleX(1.0060);letter-spacing:0.88px;">22</div>
<div class="t" style="left:67.00px;top:258.00px;transform:scaleX(1.0716);">Абонплаты</div>
<div class="t" style="left:217.00px;top:258.00px;transform:scaleX(1.0556);">Модуль абонплат</div>
<div style="left:16px;top:274px;width:380px;height:15px;background:#fdfdfc;"></div>
<div style="left:65px;top:274px;width:1px;height:16px;background:#9c9d9b;"></div>
<div style="left:215px;top:274px;width:1px;height:16px;background:#9c9d9b;"></div>
<div style="left:395px;top:274px;width:1px;height:16px;background:#9c9d9b;"></div>
<div style="left:16px;top:289px;width:380px;height:1px;background:#9c9d9b;"></div>
<div class="t" style="left:17.00px;top:274.00px;transform:scaleX(1.0060);letter-spacing:0.88px;">21</div>
<div class="t" style="left:67.00px;top:274.00px;transform:scaleX(1.0949);">Dial-Up</div>
<div class="t" style="left:217.00px;top:274.00px;transform:scaleX(1.0803);">Коммутируемые соединения</div>
<div style="left:16px;top:290px;width:380px;height:15px;background:#fdfdfc;"></div>
<div style="left:65px;top:290px;width:1px;height:16px;background:#9c9d9b;"></div>
<div style="left:215px;top:290px;width:1px;height:16px;background:#9c9d9b;"></div>
<div style="left:395px;top:290px;width:1px;height:16px;background:#9c9d9b;"></div>
<div style="left:16px;top:305px;width:380px;height:1px;background:#9c9d9b;"></div>
<div class="t" style="left:17.00px;top:290.00px;transform:scaleX(1.0000);letter-spacing:0.88px;">1</div>
<div class="t" style="left:67.00px;top:290.00px;transform:scaleX(1.0782);">E-Mail</div>
<div class="t" style="left:217.00px;top:290.00px;transform:scaleX(1.0520);">E-Mail</div>
<div style="left:16px;top:306px;width:380px;height:15px;background:#fdfdfc;"></div>
<div style="left:65px;top:306px;width:1px;height:16px;background:#9c9d9b;"></div>
<div style="left:215px;top:306px;width:1px;height:16px;background:#9c9d9b;"></div>
<div style="left:395px;top:306px;width:1px;height:16px;background:#9c9d9b;"></div>
<div style="left:16px;top:321px;width:380px;height:1px;background:#9c9d9b;"></div>
<div class="t" style="left:17.00px;top:306.00px;transform:scaleX(1.0060);letter-spacing:0.88px;">43</div>
<div class="t" style="left:67.00px;top:306.00px;transform:scaleX(1.1134);">CerberCrypt</div>
<div class="t" style="left:217.00px;top:306.00px;transform:scaleX(1.1034);">CerberCrypt</div>
<div style="left:16px;top:322px;width:380px;height:15px;background:#fdfdfc;"></div>
<div style="left:65px;top:322px;width:1px;height:16px;background:#9c9d9b;"></div>
<div style="left:215px;top:322px;width:1px;height:16px;background:#9c9d9b;"></div>
<div style="left:395px;top:322px;width:1px;height:16px;background:#9c9d9b;"></div>
<div style="left:16px;top:337px;width:380px;height:1px;background:#9c9d9b;"></div>
<div class="t" style="left:17.00px;top:322.00px;transform:scaleX(1.0060);letter-spacing:0.88px;">65</div>
<div class="t" style="left:67.00px;top:322.00px;transform:scaleX(1.0604);">Бухгалтерия</div>
<div class="t" style="left:217.00px;top:322.00px;transform:scaleX(1.0509);">Бухгалтерия</div>
<div style="left:16px;top:338px;width:380px;height:15px;background:#fdfdfc;"></div>
<div style="left:65px;top:338px;width:1px;height:16px;background:#9c9d9b;"></div>
<div style="left:215px;top:338px;width:1px;height:16px;background:#9c9d9b;"></div>
<div style="left:395px;top:338px;width:1px;height:16px;background:#9c9d9b;"></div>
<div style="left:16px;top:353px;width:380px;height:1px;background:#9c9d9b;"></div>
<div class="t" style="left:17.00px;top:338.00px;transform:scaleX(1.0060);letter-spacing:0.88px;">46</div>
<div class="t" style="left:67.00px;top:338.00px;transform:scaleX(1.1540);">Город</div>
<div class="t" style="left:217.00px;top:338.00px;transform:scaleX(1.0355);">Платежная система ГОРОД</div>
<div style="left:16px;top:354px;width:380px;height:15px;background:#fdfdfc;"></div>
<div style="left:65px;top:354px;width:1px;height:16px;background:#9c9d9b;"></div>
<div style="left:215px;top:354px;width:1px;height:16px;background:#9c9d9b;"></div>
<div style="left:395px;top:354px;width:1px;height:16px;background:#9c9d9b;"></div>
<div style="left:16px;top:369px;width:380px;height:1px;background:#9c9d9b;"></div>
<div class="t" style="left:17.00px;top:354.00px;transform:scaleX(1.0060);letter-spacing:0.88px;">27</div>
<div class="t" style="left:67.00px;top:354.00px;transform:scaleX(1.0327);">Отчеты</div>
<div class="t" style="left:217.00px;top:354.00px;transform:scaleX(1.0167);">Отчеты</div>
<div style="left:16px;top:370px;width:380px;height:15px;background:#fdfdfc;"></div>
<div style="left:65px;top:370px;width:1px;height:16px;background:#9c9d9b;"></div>
<div style="left:215px;top:370px;width:1px;height:16px;background:#9c9d9b;"></div>
<div style="left:395px;top:370px;width:1px;height:16px;background:#9c9d9b;"></div>
<div style="left:16px;top:385px;width:380px;height:1px;background:#9c9d9b;"></div>
<div class="t" style="left:17.00px;top:370.00px;transform:scaleX(1.0060);letter-spacing:0.88px;">54</div>
<div class="t" style="left:67.00px;top:370.00px;transform:scaleX(0.9274);">WM</div>
<div class="t" style="left:217.00px;top:370.00px;transform:scaleX(1.0108);">WebMoney</div>
<div style="left:16px;top:386px;width:380px;height:15px;background:#fdfdfc;"></div>
<div style="left:65px;top:386px;width:1px;height:16px;background:#9c9d9b;"></div>
<div style="left:215px;top:386px;width:1px;height:16px;background:#9c9d9b;"></div>
<div style="left:395px;top:386px;width:1px;height:16px;background:#9c9d9b;"></div>
<div style="left:16px;top:401px;width:380px;height:1px;background:#9c9d9b;"></div>
<div class="t" style="left:17.00px;top:386.00px;transform:scaleX(1.0060);letter-spacing:0.88px;">60</div>
<div class="t" style="left:67.00px;top:386.00px;transform:scaleX(0.9315);">RSCM</div>
<div class="t" style="left:217.00px;top:386.00px;transform:scaleX(1.0603);">RSCM - Обсчет произвольных ...</div>
<div style="left:16px;top:402px;width:380px;height:15px;background:#fdfdfc;"></div>
<div style="left:65px;top:402px;width:1px;height:16px;background:#9c9d9b;"></div>
<div style="left:215px;top:402px;width:1px;height:16px;background:#9c9d9b;"></div>
<div style="left:395px;top:402px;width:1px;height:16px;background:#9c9d9b;"></div>
<div style="left:16px;top:417px;width:380px;height:1px;background:#9c9d9b;"></div>
<div class="t" style="left:17.00px;top:402.00px;transform:scaleX(1.0101);letter-spacing:0.88px;">134</div>
<div class="t" style="left:67.00px;top:402.00px;transform:scaleX(1.0640);">new rscm</div>
<div class="t" style="left:217.00px;top:402.00px;transform:scaleX(1.0603);">RSCM - Обсчет произвольных ...</div>
<div style="left:16px;top:418px;width:380px;height:15px;background:#fdfdfc;"></div>
<div style="left:65px;top:418px;width:1px;height:16px;background:#9c9d9b;"></div>
<div style="left:215px;top:418px;width:1px;height:16px;background:#9c9d9b;"></div>
<div style="left:395px;top:418px;width:1px;height:16px;background:#9c9d9b;"></div>
<div style="left:16px;top:433px;width:380px;height:1px;background:#9c9d9b;"></div>
<div class="t" style="left:17.00px;top:418.00px;transform:scaleX(1.0060);letter-spacing:0.88px;">66</div>
<div class="t" style="left:67.00px;top:418.00px;transform:scaleX(1.0457);">Новые абонплаты</div>
<div class="t" style="left:217.00px;top:418.00px;transform:scaleX(1.0751);">Абонплаты</div>
<div style="left:16px;top:434px;width:380px;height:15px;background:#fdfdfc;"></div>
<div style="left:65px;top:434px;width:1px;height:16px;background:#9c9d9b;"></div>
<div style="left:215px;top:434px;width:1px;height:16px;background:#9c9d9b;"></div>
<div style="left:395px;top:434px;width:1px;height:16px;background:#9c9d9b;"></div>
<div style="left:16px;top:449px;width:380px;height:1px;background:#9c9d9b;"></div>
<div class="t" style="left:17.00px;top:434.00px;transform:scaleX(1.0060);letter-spacing:0.88px;">70</div>
<div class="t" style="left:67.00px;top:434.00px;transform:scaleX(0.8760);">MPS</div>
<div class="t" style="left:217.00px;top:434.00px;transform:scaleX(1.0324);">Платежные системы</div>
<div style="left:16px;top:450px;width:380px;height:15px;background:#fdfdfc;"></div>
<div style="left:65px;top:450px;width:1px;height:16px;background:#9c9d9b;"></div>
<div style="left:215px;top:450px;width:1px;height:16px;background:#9c9d9b;"></div>
<div style="left:395px;top:450px;width:1px;height:16px;background:#9c9d9b;"></div>
<div style="left:16px;top:465px;width:380px;height:1px;background:#9c9d9b;"></div>
<div class="t" style="left:17.00px;top:450.00px;transform:scaleX(1.0060);letter-spacing:0.88px;">73</div>
<div class="t" style="left:67.00px;top:450.00px;transform:scaleX(1.0380);">Phone</div>
<div class="t" style="left:217.00px;top:450.00px;transform:scaleX(1.0562);">Телефония</div>
<div style="left:16px;top:466px;width:380px;height:15px;background:#fdfdfc;"></div>
<div style="left:65px;top:466px;width:1px;height:16px;background:#9c9d9b;"></div>
<div style="left:215px;top:466px;width:1px;height:16px;background:#9c9d9b;"></div>
<div style="left:395px;top:466px;width:1px;height:16px;background:#9c9d9b;"></div>
<div style="left:16px;top:481px;width:380px;height:1px;background:#9c9d9b;"></div>
<div class="t" style="left:17.00px;top:466.00px;transform:scaleX(1.0695);letter-spacing:0.88px;">110</div>
<div class="t" style="left:67.00px;top:466.00px;transform:scaleX(1.0762);">Ticket</div>
<div class="t" style="left:217.00px;top:466.00px;transform:scaleX(1.0690);">Ticket</div>
<div style="left:16px;top:482px;width:380px;height:15px;background:#fdfdfc;"></div>
<div style="left:65px;top:482px;width:1px;height:16px;background:#9c9d9b;"></div>
<div style="left:215px;top:482px;width:1px;height:16px;background:#9c9d9b;"></div>
<div style="left:395px;top:482px;width:1px;height:16px;background:#9c9d9b;"></div>
<div style="left:16px;top:497px;width:380px;height:1px;background:#9c9d9b;"></div>
<div class="t" style="left:17.00px;top:482.00px;transform:scaleX(1.0060);letter-spacing:0.88px;">95</div>
<div class="t" style="left:67.00px;top:482.00px;transform:scaleX(1.0910);">Хостинг/DNS</div>
<div class="t" style="left:217.00px;top:482.00px;transform:scaleX(0.9765);">HD</div>
<div style="left:16px;top:498px;width:380px;height:15px;background:#fdfdfc;"></div>
<div style="left:65px;top:498px;width:1px;height:16px;background:#9c9d9b;"></div>
<div style="left:215px;top:498px;width:1px;height:16px;background:#9c9d9b;"></div>
<div style="left:395px;top:498px;width:1px;height:16px;background:#9c9d9b;"></div>
<div style="left:16px;top:513px;width:380px;height:1px;background:#9c9d9b;"></div>
<div class="t" style="left:17.00px;top:498.00px;transform:scaleX(1.1364);letter-spacing:0.88px;">111</div>
<div class="t" style="left:67.00px;top:498.00px;transform:scaleX(1.0148);">HD</div>
<div class="t" style="left:217.00px;top:498.00px;transform:scaleX(0.9765);">HD</div>
<div style="left:16px;top:514px;width:380px;height:15px;background:#fdfdfc;"></div>
<div style="left:65px;top:514px;width:1px;height:16px;background:#9c9d9b;"></div>
<div style="left:215px;top:514px;width:1px;height:16px;background:#9c9d9b;"></div>
<div style="left:395px;top:514px;width:1px;height:16px;background:#9c9d9b;"></div>
<div style="left:16px;top:529px;width:380px;height:1px;background:#9c9d9b;"></div>
<div class="t" style="left:17.00px;top:514.00px;transform:scaleX(1.0000);letter-spacing:0.88px;">8</div>
<div class="t" style="left:67.00px;top:514.00px;transform:scaleX(0.9227);">DBA</div>
<div class="t" style="left:217.00px;top:514.00px;transform:scaleX(0.9483);">DBA</div>
<div style="left:16px;top:530px;width:380px;height:15px;background:#fdfdfc;"></div>
<div style="left:65px;top:530px;width:1px;height:16px;background:#9c9d9b;"></div>
<div style="left:215px;top:530px;width:1px;height:16px;background:#9c9d9b;"></div>
<div style="left:395px;top:530px;width:1px;height:16px;background:#9c9d9b;"></div>
<div style="left:16px;top:545px;width:380px;height:1px;background:#9c9d9b;"></div>
<div class="t" style="left:17.00px;top:530.00px;transform:scaleX(1.0101);letter-spacing:0.88px;">121</div>
<div class="t" style="left:67.00px;top:530.00px;transform:scaleX(1.0737);">drweb</div>
<div class="t" style="left:217.00px;top:530.00px;transform:scaleX(1.0290);">Dw.Web AV-DESK</div>
<div style="left:16px;top:546px;width:380px;height:15px;background:#fdfdfc;"></div>
<div style="left:65px;top:546px;width:1px;height:16px;background:#9c9d9b;"></div>
<div style="left:215px;top:546px;width:1px;height:16px;background:#9c9d9b;"></div>
<div style="left:395px;top:546px;width:1px;height:16px;background:#9c9d9b;"></div>
<div style="left:16px;top:561px;width:380px;height:1px;background:#9c9d9b;"></div>
<div class="t" style="left:17.00px;top:546.00px;transform:scaleX(1.0101);letter-spacing:0.88px;">130</div>
<div class="t" style="left:67.00px;top:546.00px;transform:scaleX(1.0872);">Assist.Ru</div>
<div class="t" style="left:217.00px;top:546.00px;transform:scaleX(1.0585);">Assist.RU</div>
<div style="left:396px;top:114px;width:1px;height:460px;background:#7b7d7a;"></div>
<div style="left:397px;top:114px;width:14px;height:1px;background:#fdfdfc;"></div>
<div style="left:397px;top:114px;width:1px;height:16px;background:#fdfdfc;"></div>
<div style="left:397px;top:129px;width:14px;height:1px;background:#6f716e;"></div>
<svg style="left:400px;top:119px" width="8" height="4"><path d="M0 4H8L4 0Z" fill="#000"/></svg>
<div style="left:397px;top:559px;width:14px;height:1px;background:#fdfdfc;"></div>
<div style="left:397px;top:559px;width:1px;height:15px;background:#fdfdfc;"></div>
<div style="left:397px;top:573px;width:14px;height:1px;background:#6f716e;"></div>
<svg style="left:400px;top:565px" width="8" height="4"><path d="M0 0H8L4 4Z" fill="#000"/></svg>
<div style="left:397px;top:558px;width:14px;height:1px;background:#7b7d7a;"></div>
<div style="left:425px;top:87px;width:6px;height:1px;background:#8e908d;"></div>
<div style="left:484px;top:87px;width:355px;height:1px;background:#8e908d;"></div>
<div style="left:425px;top:87px;width:1px;height:497px;background:#8e908d;"></div>
<div style="left:838px;top:87px;width:1px;height:497px;background:#8e908d;"></div>
<div style="left:425px;top:583px;width:414px;height:1px;background:#8e908d;"></div>
<div style="left:426px;top:88px;width:5px;height:1px;background:#cfd1ce;"></div>
<div style="left:484px;top:88px;width:354px;height:1px;background:#cfd1ce;"></div>
<div style="left:426px;top:88px;width:1px;height:495px;background:#cfd1ce;"></div>
<div style="left:839px;top:87px;width:1px;height:498px;background:#cfd1ce;"></div>
<div style="left:425px;top:584px;width:415px;height:1px;background:#cfd1ce;"></div>
<div class="t b" style="left:436.00px;top:80.00px;transform:scaleX(1.0559);">Услуги</div>
<div style="left:433px;top:132px;width:397px;height:334px;background:transparent;border:1px solid #8e908d;"></div>
<div style="left:830px;top:132px;width:1px;height:335px;background:#fdfdfc;"></div>
<div style="left:433px;top:466px;width:398px;height:1px;background:#fdfdfc;"></div>
<div style="left:434px;top:133px;width:49px;height:1px;background:#fdfdfc;"></div>
<div style="left:434px;top:133px;width:1px;height:13px;background:#fdfdfc;"></div>
<div style="left:483px;top:133px;width:1px;height:14px;background:#8e908d;"></div>
<div style="left:434px;top:146px;width:50px;height:1px;background:#8e908d;"></div>
<div class="t" style="left:448.86px;top:132.50px;transform:scaleX(1.1681);">Код</div>
<div style="left:484px;top:133px;width:239px;height:1px;background:#fdfdfc;"></div>
<div style="left:484px;top:133px;width:1px;height:13px;background:#fdfdfc;"></div>
<div style="left:723px;top:133px;width:1px;height:14px;background:#8e908d;"></div>
<div style="left:484px;top:146px;width:240px;height:1px;background:#8e908d;"></div>
<div class="t" style="left:577.96px;top:132.50px;transform:scaleX(1.0417);">Название</div>
<div style="left:724px;top:133px;width:89px;height:1px;background:#fdfdfc;"></div>
<div style="left:724px;top:133px;width:1px;height:13px;background:#fdfdfc;"></div>
<div style="left:813px;top:133px;width:1px;height:14px;background:#8e908d;"></div>
<div style="left:724px;top:146px;width:90px;height:1px;background:#8e908d;"></div>
<div class="t" style="left:729.97px;top:132.50px;transform:scaleX(1.0267);">Используется?</div>
<div style="left:434px;top:147px;width:380px;height:15px;background:#ccccfc;"></div>
<div style="left:483px;top:147px;width:1px;height:16px;background:#9c9d9b;"></div>
<div style="left:723px;top:147px;width:1px;height:16px;background:#9c9d9b;"></div>
<div style="left:813px;top:147px;width:1px;height:16px;background:#9c9d9b;"></div>
<div style="left:434px;top:162px;width:380px;height:1px;background:#9c9d9b;"></div>
<div class="t" style="left:435.00px;top:147.00px;transform:scaleX(1.0060);letter-spacing:0.88px;">28</div>
<div class="t" style="left:485.00px;top:147.00px;transform:scaleX(1.0600);">Тестовая абонплата</div>
<svg style="left:762px;top:148px" width="13" height="13" viewBox="0 0 13 13" shape-rendering="crispEdges"><rect x="1" y="1" width="12" height="12" fill="#fdfdfc"/><rect x="0" y="0" width="12" height="12" fill="#8e908d"/><rect x="1" y="1" width="10" height="10" fill="#fdfdfc"/><rect x="2" y="2" width="9" height="9" fill="#ccccfc"/><rect x="3" y="5" width="2" height="5" fill="#000"/><rect x="9" y="3" width="1" height="2" fill="#000"/><rect x="8" y="4" width="1" height="2" fill="#000"/><rect x="7" y="5" width="1" height="2" fill="#000"/><rect x="6" y="6" width="1" height="2" fill="#000"/><rect x="5" y="7" width="1" height="2" fill="#000"/></svg>
<div style="left:814px;top:147px;width:1px;height:318px;background:#7b7d7a;"></div>
<div style="left:815px;top:147px;width:14px;height:1px;background:#fdfdfc;"></div>
<div style="left:815px;top:147px;width:1px;height:16px;background:#fdfdfc;"></div>
<div style="left:815px;top:162px;width:14px;height:1px;background:#6f716e;"></div>
<svg style="left:818px;top:152px" width="8" height="4"><path d="M0 4H8L4 0Z" fill="#000"/></svg>
<div style="left:815px;top:450px;width:14px;height:1px;background:#fdfdfc;"></div>
<div style="left:815px;top:450px;width:1px;height:15px;background:#fdfdfc;"></div>
<div style="left:815px;top:464px;width:14px;height:1px;background:#6f716e;"></div>
<svg style="left:818px;top:456px" width="8" height="4"><path d="M0 0H8L4 4Z" fill="#000"/></svg>
<div style="left:815px;top:449px;width:14px;height:1px;background:#7b7d7a;"></div>
<div style="left:430px;top:474px;width:7px;height:1px;background:#8e908d;"></div>
<div style="left:499px;top:474px;width:335px;height:1px;background:#8e908d;"></div>
<div style="left:430px;top:474px;width:1px;height:105px;background:#8e908d;"></div>
<div style="left:833px;top:474px;width:1px;height:105px;background:#8e908d;"></div>
<div style="left:430px;top:578px;width:404px;height:1px;background:#8e908d;"></div>
<div style="left:431px;top:475px;width:6px;height:1px;background:#cfd1ce;"></div>
<div style="left:499px;top:475px;width:334px;height:1px;background:#cfd1ce;"></div>
<div style="left:431px;top:475px;width:1px;height:103px;background:#cfd1ce;"></div>
<div style="left:834px;top:474px;width:1px;height:106px;background:#cfd1ce;"></div>
<div style="left:430px;top:579px;width:405px;height:1px;background:#cfd1ce;"></div>
<div class="t b" style="left:439.94px;top:467.30px;transform:scaleX(1.0612);">Редактор</div>
<div style="left:443px;top:486px;width:377px;height:23px;background:#fdfdfc;border:1px solid #8e908d;"></div>
<div style="left:820px;top:486px;width:1px;height:24px;background:#fdfdfc;"></div>
<div style="left:443px;top:509px;width:378px;height:1px;background:#fdfdfc;"></div>
<div class="t" style="left:445.00px;top:491.00px;transform:scaleX(1.0600);">Тестовая абонплата</div>
<svg style="left:447px;top:515px" width="13" height="13" viewBox="0 0 13 13" shape-rendering="crispEdges"><rect x="1" y="1" width="12" height="12" fill="#fdfdfc"/><rect x="0" y="0" width="12" height="12" fill="#8e908d"/><rect x="1" y="1" width="10" height="10" fill="#fdfdfc"/><rect x="2" y="2" width="9" height="9" fill="#c9cbc8"/><rect x="3" y="5" width="2" height="5" fill="#000"/><rect x="9" y="3" width="1" height="2" fill="#000"/><rect x="8" y="4" width="1" height="2" fill="#000"/><rect x="7" y="5" width="1" height="2" fill="#000"/><rect x="6" y="6" width="1" height="2" fill="#000"/><rect x="5" y="7" width="1" height="2" fill="#000"/></svg>
<div style="left:463px;top:513px;width:81px;height:16px;background:transparent;border:1px solid #9a9ad0;"></div>
<div class="t b" style="left:463.97px;top:514.00px;transform:scaleX(1.0271);">Используется</div>
<div style="left:679px;top:542px;width:49px;height:23px;background:transparent;border:1px solid #8e908d;"></div>
<div style="left:728px;top:542px;width:1px;height:24px;background:#fdfdfc;"></div>
<div style="left:679px;top:565px;width:50px;height:1px;background:#fdfdfc;"></div>
<div style="left:680px;top:543px;width:1px;height:21px;background:#fdfdfc;"></div>
<div style="left:680px;top:543px;width:47px;height:1px;background:#fdfdfc;"></div>
<div class="t b" style="left:697.00px;top:547.00px;transform:scaleX(1.0740);">Ок</div>
<div style="left:737px;top:542px;width:75px;height:23px;background:transparent;border:1px solid #8e908d;"></div>
<div style="left:812px;top:542px;width:1px;height:24px;background:#fdfdfc;"></div>
<div style="left:737px;top:565px;width:76px;height:1px;background:#fdfdfc;"></div>
<div style="left:738px;top:543px;width:1px;height:21px;background:#fdfdfc;"></div>
<div style="left:738px;top:543px;width:73px;height:1px;background:#fdfdfc;"></div>
<div class="t b" style="left:755.00px;top:547.00px;transform:scaleX(1.0000);">Отмена</div>
<div style="left:5px;top:607px;width:189px;height:1px;background:#6e706d;"></div>
<div style="left:5px;top:606px;width:188px;height:1px;background:#a0a2a0;"></div>
<div style="left:194px;top:589px;width:1px;height:17px;background:#7b7d7a;"></div>
<div style="left:3px;top:609px;width:841px;height:1px;background:#e6e2da;"></div>
<div style="left:843px;top:589px;width:1px;height:21px;background:#e6e2da;"></div>
<div style="left:8px;top:590px;width:16px;height:16px;background:transparent;border:1px solid #a5a298;border-top-color:#fdfdfc;border-left-color:#fdfdfc;"></div>
<svg style="left:11px;top:593px" width="10" height="10"><path d="M2 2L8 8M8 2L2 8" stroke="#111" stroke-width="2.2" stroke-linecap="round"/></svg>
<div class="t b" style="left:28.94px;top:591.00px;transform:scaleX(1.0634);">Редактор модулей и услуг</div>
</div>
</body></html>
